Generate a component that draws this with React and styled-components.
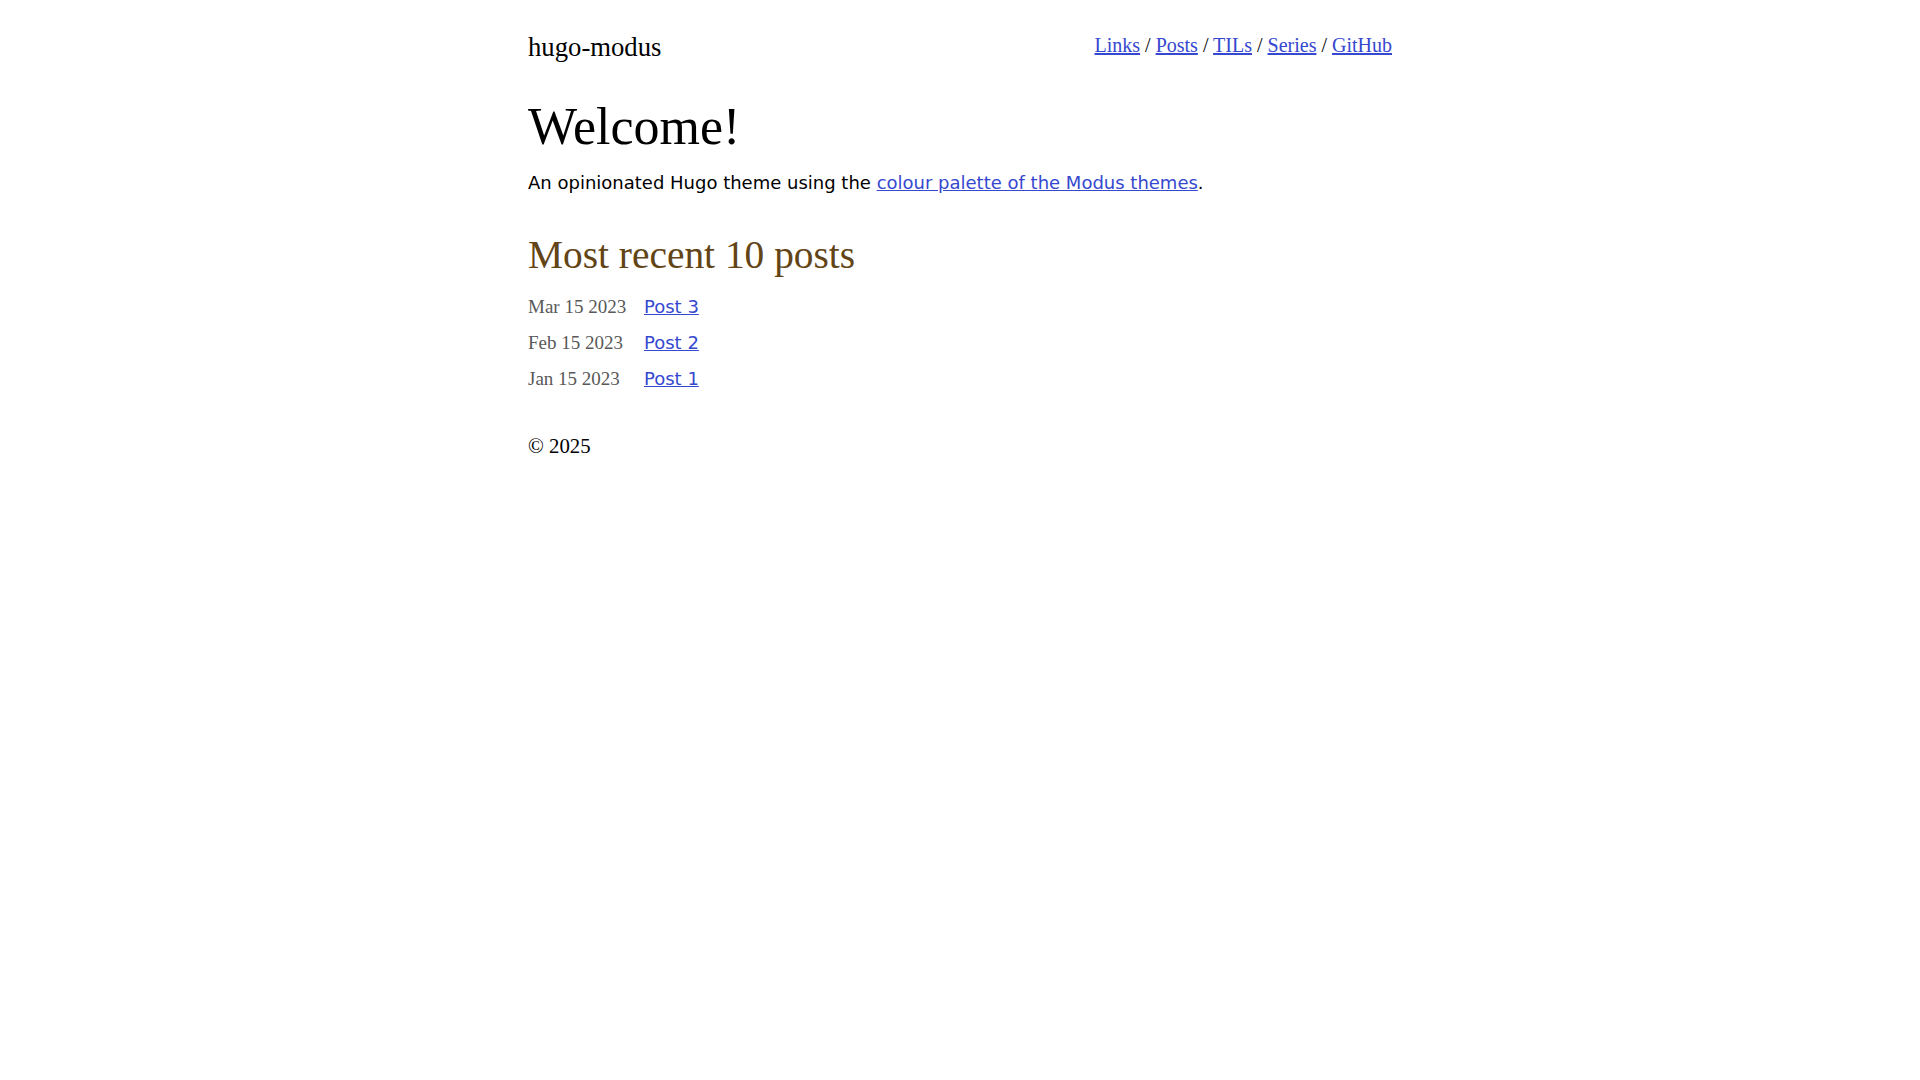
import React from "react";
import styled, { createGlobalStyle } from "styled-components";

const GlobalStyle = createGlobalStyle`
  html, body {
    margin: 0;
    padding: 0;
    background: #ffffff;
    color: #000000;
  }
  body {
    font-family: "Liberation Serif", "DejaVu Serif", serif;
  }
`;

const Page = styled.div`
  width: 864px;
  margin: 0 auto;
  padding-top: 31px;
`;

const Header = styled.header`
  display: flex;
  justify-content: space-between;
  align-items: center;
`;

const SiteTitle = styled.a`
  font-family: "Liberation Serif", serif;
  font-size: 26.7px;
  line-height: 1.2;
  color: #000000;
  text-decoration: none;
`;

const Nav = styled.nav`
  font-family: "Liberation Serif", serif;
  font-size: 20px;
  line-height: 1.2;
  color: #000000;
  padding-bottom: 5px;
`;

const SerifLink = styled.a`
  color: #3548cf;
  text-decoration: underline;
`;

const Title = styled.h1`
  margin: 33px 0 0;
  font-family: "Liberation Serif", serif;
  font-weight: normal;
  font-size: 52px;
  line-height: 1.2;
`;

const Intro = styled.p`
  margin: 11px 0 0;
  font-family: "DejaVu Sans", "Noto Sans", sans-serif;
  font-size: 18px;
  line-height: 1.5;
`;

const SansLink = styled.a`
  color: #3548cf;
  text-decoration: underline;
`;

const SectionTitle = styled.h2`
  margin: 36px 0 0;
  font-family: "Liberation Serif", serif;
  font-weight: normal;
  font-size: 39.4px;
  line-height: 1.2;
  color: #624416;
`;

const PostList = styled.ul`
  list-style: none;
  margin: 9px 0 0;
  padding: 0;
`;

const PostRow = styled.li`
  display: grid;
  grid-template-columns: 116px 1fr;
  align-items: baseline;
  line-height: 36px;
`;

const PostDate = styled.time`
  font-family: "Liberation Serif", serif;
  font-size: 19px;
  color: #595959;
`;

const PostLink = styled(SansLink)`
  font-family: "DejaVu Sans", "Noto Sans", sans-serif;
  font-size: 18px;
  justify-self: start;
`;

const Footer = styled.footer`
  margin-top: 37px;
  font-family: "Liberation Serif", serif;
  font-size: 20.8px;
  line-height: 1.2;
`;

const navItems = ["Links", "Posts", "TILs", "Series", "GitHub"];

const posts = [
  { date: "Mar 15 2023", title: "Post 3" },
  { date: "Feb 15 2023", title: "Post 2" },
  { date: "Jan 15 2023", title: "Post 1" },
];

const App = () => {
  return (
    <>
      <GlobalStyle />
      <Page>
        <Header>
          <SiteTitle href="#">hugo-modus</SiteTitle>
          <Nav>
            {navItems.map((item, i) => (
              <React.Fragment key={item}>
                {i > 0 && " / "}
                <SerifLink href="#">{item}</SerifLink>
              </React.Fragment>
            ))}
          </Nav>
        </Header>
        <main>
          <Title>Welcome!</Title>
          <Intro>
            An opinionated Hugo theme using the{" "}
            <SansLink href="#">colour palette of the Modus themes</SansLink>.
          </Intro>
          <SectionTitle>Most recent 10 posts</SectionTitle>
          <PostList>
            {posts.map((post) => (
              <PostRow key={post.title}>
                <PostDate>{post.date}</PostDate>
                <PostLink href="#">{post.title}</PostLink>
              </PostRow>
            ))}
          </PostList>
        </main>
        <Footer>© 2025</Footer>
      </Page>
    </>
  );
};

export default App;
